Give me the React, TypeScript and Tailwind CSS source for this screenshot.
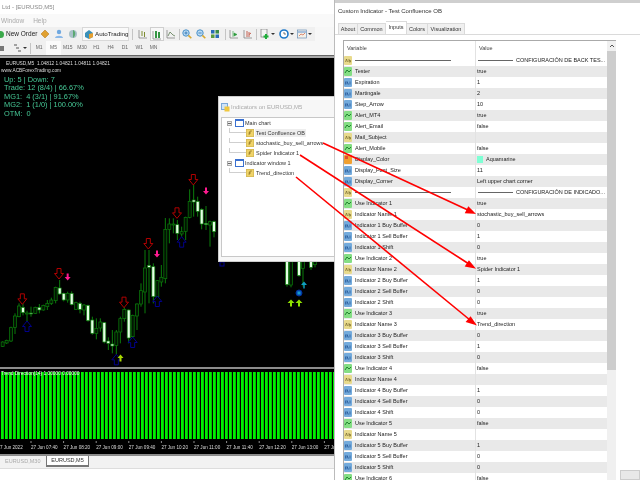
import type { ReactNode } from "react"

// [x, wickTop, wickBottom, bodyTop, bodyBottom, white] in 3x crop units
const candles: number[][] = [
  [8, 634, 651, 636, 649, 0], [20, 629, 642, 631, 639, 0], [33, 590, 636, 593, 633, 0],
  [45, 550, 612, 558, 592, 0], [57, 520, 562, 528, 560, 0], [69, 520, 556, 532, 548, 1],
  [81, 542, 600, 549, 552, 0], [93, 530, 560, 549, 552, 1], [106, 530, 552, 532, 550, 0],
  [118, 522, 550, 532, 540, 1], [130, 524, 542, 526, 540, 0], [142, 510, 540, 520, 530, 0],
  [154, 503, 525, 510, 520, 0], [167, 470, 520, 472, 512, 0], [179, 450, 495, 474, 492, 1],
  [191, 488, 514, 490, 510, 1], [203, 485, 518, 490, 510, 0], [215, 484, 526, 490, 524, 1],
  [228, 515, 540, 518, 538, 0], [240, 515, 550, 520, 538, 1], [252, 522, 556, 525, 540, 0],
  [264, 524, 575, 526, 572, 1], [277, 560, 614, 570, 610, 1], [289, 565, 628, 595, 610, 0],
  [301, 565, 605, 576, 594, 0], [313, 576, 640, 578, 636, 1], [325, 622, 660, 633, 640, 1],
  [337, 600, 670, 642, 648, 1], [349, 600, 675, 606, 646, 0], [361, 560, 640, 566, 606, 0],
  [373, 525, 575, 538, 566, 0], [386, 538, 640, 540, 624, 1], [398, 554, 624, 556, 620, 0],
  [411, 520, 600, 522, 558, 0], [423, 460, 530, 482, 522, 0], [435, 360, 550, 414, 486, 0],
  [447, 360, 520, 406, 412, 1], [460, 400, 520, 410, 500, 1], [472, 450, 520, 452, 500, 0],
  [484, 405, 470, 442, 456, 0], [496, 264, 460, 298, 446, 0], [508, 265, 340, 282, 298, 0],
  [520, 265, 310, 282, 285, 0], [532, 270, 330, 284, 310, 1], [545, 290, 320, 305, 312, 0],
  [557, 260, 330, 262, 304, 0], [569, 178, 265, 214, 262, 0], [581, 165, 260, 210, 216, 1],
  [593, 200, 260, 214, 244, 1], [605, 235, 298, 238, 282, 1], [618, 228, 300, 280, 284, 1],
  [630, 272, 350, 275, 285, 0], [642, 272, 322, 275, 305, 1],
  // right of the floating window
  [861, 390, 470, 390, 464, 1], [873, 390, 472, 390, 465, 0], [897, 390, 440, 390, 437, 1],
  [909, 390, 470, 390, 415, 0], [933, 390, 420, 390, 412, 1], [945, 390, 412, 390, 404, 0],
]

const redArrows = [[67, 508], [177, 432], [372, 518], [445, 342], [531, 250], [580, 150]]
const pinkArrows = [[203, 441], [471, 372], [618, 183]]
const blueArrows = [[81, 588], [349, 688], [398, 636], [472, 513], [545, 335]]

const timeLabels = ["07:40", "08:20", "09:00", "09:40", "10:20", "11:00", "11:40", "12:20", "13:00"]
const periods = ["M1", "M5", "M15", "M30", "H1", "H4", "D1", "W1", "MN"]

type RowType = "s" | "b" | "n" | "c"
const rows: [RowType, string, string][] = [
  ["s", "—", "CONFIGURACIÓN DE BACK TES..."],
  ["b", "Tester", "true"],
  ["n", "Expiration", "1"],
  ["n", "Martingale", "2"],
  ["n", "Step_Arrow", "10"],
  ["b", "Alert_MT4", "true"],
  ["b", "Alert_Email", "false"],
  ["s", "Mail_Subject", ""],
  ["b", "Alert_Mobile", "false"],
  ["c", "Display_Color", "Aquamarine"],
  ["n", "Display_Font_Size", "11"],
  ["n", "Display_Corner", "Left upper chart corner"],
  ["s", "—", "CONFIGURACIÓN DE INDICADO..."],
  ["b", "Use Indicator 1", "true"],
  ["s", "Indicator Name 1", "stochastic_buy_sell_arrows"],
  ["n", "Indicator 1 Buy Buffer", "0"],
  ["n", "Indicator 1 Sell Buffer", "1"],
  ["n", "Indicator 1 Shift", "0"],
  ["b", "Use Indicator 2", "true"],
  ["s", "Indicator Name 2", "Spider Indicator 1"],
  ["n", "Indicator 2 Buy Buffer", "1"],
  ["n", "Indicator 2 Sell Buffer", "0"],
  ["n", "Indicator 2 Shift", "0"],
  ["b", "Use Indicator 3", "true"],
  ["s", "Indicator Name 3", "Trend_direction"],
  ["n", "Indicator 3 Buy Buffer", "0"],
  ["n", "Indicator 3 Sell Buffer", "1"],
  ["n", "Indicator 3 Shift", "0"],
  ["b", "Use Indicator 4", "false"],
  ["s", "Indicator Name 4", ""],
  ["n", "Indicator 4 Buy Buffer", "1"],
  ["n", "Indicator 4 Sell Buffer", "0"],
  ["n", "Indicator 4 Shift", "0"],
  ["b", "Use Indicator 5", "false"],
  ["s", "Indicator Name 5", ""],
  ["n", "Indicator 5 Buy Buffer", "1"],
  ["n", "Indicator 5 Sell Buffer", "0"],
  ["n", "Indicator 5 Shift", "0"],
  ["b", "Use Indicator 6", "false"],
]

const Ico = ({ children, w = 10 }: { children: ReactNode; w?: number }) => (
  <svg width={w} height={10} viewBox="0 0 10 10" className="shrink-0">
    {children}
  </svg>
)

const Tool = ({ children, w = "w-[14px]" }: { children: ReactNode; w?: string }) => (
  <div className={`flex ${w} h-[14px] shrink-0 items-center justify-center`}>{children}</div>
)

const Sep = ({ m = "mx-[3px]" }: { m?: string }) => <div className={`${m} h-[11px] w-px shrink-0 bg-[#c4c4c4]`} />

const Caret = () => <div className="ml-px h-0 w-0 border-x-[2px] border-t-[2px] border-x-transparent border-t-[#333]" />

const ChartIcon = ({ kind }: { kind: string }) => (
  <Ico>
    <path d="M1 1v8h8" stroke="#777" strokeWidth="0.7" fill="none" />
    {kind === "bar" && <path d="M4 2v5M6.5 3v5" stroke="#7c8c30" strokeWidth="1" />}
    {kind === "candle" && <path d="M4 1v7M7 2v6" stroke="#1f8a30" strokeWidth="1.8" />}
    {kind === "line" && <path d="M2 7l2-4 3 3 2 1" stroke="#5a7a50" strokeWidth="0.8" fill="none" />}
    {kind === "shift" && <path d="M4 2v6M5 4l3 1.5L5 7z" fill="#2a9a3a" stroke="#2a9a3a" strokeWidth="0.6" />}
    {kind === "auto" && <path d="M4 2v6M6 3v5M8 4l-2 1.5" stroke="#c05040" strokeWidth="0.9" fill="none" />}
  </Ico>
)

const ZoomIcon = ({ plus }: { plus?: boolean }) => (
  <Ico>
    <circle cx="4" cy="4" r="3.2" fill="#bcdcf4" stroke="#4a90c8" strokeWidth="1" />
    <path d="M6.4 6.4L9.3 9.3" stroke="#d8a830" strokeWidth="1.6" />
    <path d={plus ? "M2.4 4h3.2M4 2.4v3.2" : "M2.4 4h3.2"} stroke="#2a70b0" strokeWidth="0.8" />
  </Ico>
)

const RowIcon = ({ type }: { type: RowType }) => {
  if (type === "c")
    return (
      <svg width="8" height="9" viewBox="0 0 8 9" className="shrink-0">
        <rect width="8" height="9" rx="1" fill="#f0a030" />
        <rect x="1" y="1" width="3" height="3" fill="#e05030" />
      </svg>
    )
  const fill = type === "s" ? "#e8da8c" : type === "b" ? "#84de84" : "#74abdc"
  return (
    <svg width="8" height="9" viewBox="0 0 8 9" className="shrink-0">
      <rect width="8" height="9" rx="1" fill={fill} />
      {type === "s" && <path d="M1.5 6l1-3 1 3M5 3v3h1.5V4.5H5" stroke="#6a5a20" strokeWidth="0.6" fill="none" />}
      {type === "b" && <path d="M1 6l2-3 2 2 2-2" stroke="#167a26" strokeWidth="0.9" fill="none" />}
      {type === "n" && <path d="M1.5 3.5v3M3 6.5v-3l1.5 3M6 3.5v3" stroke="#1d4f90" strokeWidth="0.7" fill="none" />}
    </svg>
  )
}

const Row = ({ row, i }: { row: [RowType, string, string]; i: number }) => {
  const [type, name, value] = row
  const divider = name === "—"
  return (
    <div className={`flex h-[11px] items-center text-[#222] ${i % 2 ? "bg-[#e9e9e9]" : "bg-white"}`}>
      <div className="flex w-[131px] shrink-0 items-center gap-[3px]">
        <RowIcon type={type} />
        {divider ? <span className="h-px w-[96px] bg-[#666]" /> : <span className="whitespace-nowrap">{name}</span>}
      </div>
      <div className="flex h-[11px] flex-1 items-center gap-[3px] border-l border-[#e2e2e2] pl-px whitespace-nowrap">
        {divider && <span className="ml-[1px] h-px w-[35px] bg-[#666]" />}
        {type === "c" && <span className="h-[7px] w-[6px] bg-[#7fffd4]" />}
        <span>{value}</span>
      </div>
    </div>
  )
}

const Chart = () => {
  const px = (x: number) => x / 3
  const py = (y: number) => 130 + y / 3
  return (
    <svg width="335" height="309" viewBox="0 58 335 309" className="absolute inset-0">
      {candles.map(([x, wt, wb, bt, bb, white], i) => (
        <g key={i}>
          <line x1={px(x)} x2={px(x)} y1={py(wt)} y2={py(wb)} stroke="#0b7d0b" strokeWidth="1" />
          <rect
            x={px(x) - 1.5}
            y={py(bt)}
            width="3"
            height={(bb - bt) / 3}
            fill={white ? "#e4ffe4" : "#021402"}
            stroke="#0b7d0b"
            strokeWidth="0.7"
          />
        </g>
      ))}
      {redArrows.map(([x, y], i) => (
        <path
          key={i}
          transform={`translate(${px(x)} ${py(y)})`}
          d="M-2-5.5h4v5h2.5L0 5-4.500-.5H-2z"
          fill="#000"
          stroke="#b00000"
          strokeWidth="1"
        />
      ))}
      {blueArrows.map(([x, y], i) => (
        <path
          key={i}
          transform={`translate(${px(x)} ${py(y)})`}
          d="M-2 5.500h4v-5h2.500L0-5-4.500.5H-2z"
          fill="#000"
          stroke="#00008b"
          strokeWidth="1"
        />
      ))}
      <rect x="220" y="262" width="4" height="4" fill="none" stroke="#00008b" strokeWidth="1" />
      {pinkArrows.map(([x, y], i) => (
        <path
          key={i}
          transform={`translate(${px(x)} ${py(y)})`}
          d="M-1-3.500h2V0h2L0 3.500-3 0h2z"
          fill="#ff1a90"
        />
      ))}
      <path transform="translate(120.500 358)" d="M-1 3.500h2V0h2L0-3.500-3 0h2z" fill="#a8d800" />
      <path transform="translate(291 303)" d="M-1 3.500h2V0h2.500L0-3.500-3.500 0h2.500z" fill="#8ee000" />
      <path transform="translate(299 303)" d="M-1 3.500h2V0h2.500L0-3.500-3.500 0h2.500z" fill="#8ee000" />
      <path transform="translate(304 285)" d="M-.7 3.500h1.400V0h2.300L0-3.500-3 0h2.300z" fill="#10a0c0" />
      <circle cx="299" cy="293" r="3" fill="#0a5ab0" stroke="#0030a0" />
      <path d="M297.500 293h3M299 291.500v3" stroke="#20d0e0" strokeWidth="0.7" />
    </svg>
  )
}

export default function App() {
  return (
    <div className="relative flex h-[480px] w-[640px] overflow-hidden bg-white font-['Liberation_Sans',sans-serif] blur-[0.35px]">
      {/* terminal */}
      <div className="flex w-[335px] shrink-0 flex-col border-r border-[#bbb]">
        <div className="flex h-[14px] items-center bg-white pl-[2px] text-[6px] text-[#8a8a8a]">Ltd - [EURUSD,M5]</div>
        <div className="flex h-[13px] items-center gap-[9px] bg-[#f9f9f9] pl-px text-[6.500px] text-[#aaa]">
          <span>Window</span>
          <span>Help</span>
        </div>
        <div className="h-[14px] bg-[#f7f7f7]">
          <div className="flex h-[14px] w-[315px] items-center bg-[#f0f0f0] text-[6.500px] text-[#222]">
            <div className="flex w-[38px] shrink-0 items-center gap-[2px]">
              <div className="h-[7px] w-[4px] rounded-r-sm bg-[#3aa84a]" />
              <span className="whitespace-nowrap">New Order</span>
            </div>
            <Tool>
              <Ico><path d="M5 1l4 4-4 4-4-4z" fill="#e0a030" stroke="#b07010" strokeWidth="0.5" /></Ico>
            </Tool>
            <Tool>
              <Ico><circle cx="5" cy="3" r="2.200" fill="#6fa8e0" /><path d="M1 9c0-3 8-3 8 0z" fill="#8ab8e8" /></Ico>
            </Tool>
            <Tool>
              <Ico><circle cx="5" cy="5" r="4" fill="#a8c0c8" /><path d="M5 1c3 1 3 6 0 8z" fill="#5aa870" /></Ico>
            </Tool>
            <div className="ml-[2px] flex h-[14px] w-[47px] shrink-0 items-center gap-[1px] border border-[#d8d8d8] bg-[#fafafa] pl-[1px]">
              <Ico><path d="M1 4l4-3 4 3v4l-4 2-4-2z" fill="#3a90b8" /><path d="M5 5l4-1v4l-4 2z" fill="#e8a030" /></Ico>
              <span className="whitespace-nowrap text-[6.200px]">AutoTrading</span>
            </div>
            <Sep />
            <Tool><ChartIcon kind="bar" /></Tool>
            <div className="h-[14px] border border-[#cfcfcf] bg-[#f8f8f8]">
              <Tool w="w-[12px]"><ChartIcon kind="candle" /></Tool>
            </div>
            <Tool><ChartIcon kind="line" /></Tool>
            <Sep m="mx-[0.5px]" />
            <Tool><ZoomIcon plus /></Tool>
            <Tool><ZoomIcon /></Tool>
            <Tool>
              <Ico>
                <rect x="1" y="1" width="8" height="8" fill="#e8f0e0" />
                <rect x="1" y="1" width="3.500" height="3.500" fill="#2a6ab8" />
                <rect x="5.500" y="1" width="3.500" height="3.500" fill="#3a8a48" />
                <rect x="1" y="5.500" width="3.500" height="3.500" fill="#5a9a40" />
                <rect x="5.500" y="5.500" width="3.500" height="3.500" fill="#2a6ab8" />
              </Ico>
            </Tool>
            <Sep m="ml-[3px] mr-[1px]" />
            <Tool><ChartIcon kind="shift" /></Tool>
            <Tool><ChartIcon kind="auto" /></Tool>
            <Sep m="ml-[1px]" />
            <div className="flex w-[18px] shrink-0 items-center justify-end">
              <Ico>
                <rect x="1" y="0" width="6" height="8" fill="#f4f4f4" stroke="#777" strokeWidth="0.7" />
                <path d="M6 5v5M3.500 7.500h5" stroke="#1fae3a" strokeWidth="2" />
              </Ico>
              <Caret />
            </div>
            <div className="ml-[4px] flex items-center">
              <Ico><circle cx="5" cy="5" r="4" fill="#fff" stroke="#1f78c8" strokeWidth="1.600" /><path d="M5 3v2h2" stroke="#444" strokeWidth="0.7" fill="none" /></Ico>
              <Caret />
            </div>
            <div className="ml-[3px] flex items-center">
              <Ico>
                <rect x="0.500" y="1" width="9" height="8" fill="#f4f0e8" stroke="#6a90b8" strokeWidth="0.700" />
                <path d="M1 3h8" stroke="#5a90d0" />
                <path d="M2 7l2-2 2 1 2-2" stroke="#d06040" strokeWidth="0.700" fill="none" />
              </Ico>
              <Caret />
            </div>
          </div>
        </div>
        <div className="h-[14px] bg-[#f7f7f7]">
          <div className="flex h-[14px] w-[160px] items-center bg-[#f0f0f0] text-[5px] text-[#666]">
            <div className="h-[5px] w-[4px] shrink-0 bg-[#777]" />
            <div className="ml-[8px] flex w-[17px] shrink-0 items-center">
              <Ico><path d="M2 2h3M4 5h3M6 8h3" stroke="#555" strokeWidth="1.200" /></Ico>
              <Caret />
            </div>
            <Sep m="mx-[1px]" />
            {periods.map((p) => (
              <div
                key={p}
                className={`flex h-[14px] w-[14.300px] shrink-0 items-center justify-center ${p === "M5" ? "bg-[#fbfbfb]" : ""}`}
              >
                {p}
              </div>
            ))}
          </div>
        </div>
        <div className="h-[3px] border-t border-[#666] bg-[#a8a8a8]" />

        {/* main chart */}
        <div className="relative h-[309px] overflow-hidden bg-black">
          <Chart />
          <div className="relative pt-[2px] text-[4.800px] leading-[7px] text-[#ddd]">
            <div className="pl-[6px] whitespace-nowrap">EURUSD,M5 &nbsp;1.04812 1.04821 1.04811 1.04821</div>
            <div className="pl-px">www.ACBForexTrading.com</div>
            <div className="mt-[2px] pl-[4px] text-[7.400px] leading-[8.400px] whitespace-pre text-[#46c896]">
              <div>Up: 5 | Down: 7</div>
              <div>Trade: 12 (8/4) | 66.67%</div>
              <div>MG1:  4 (3/1) | 91.67%</div>
              <div>MG2:  1 (1/0) | 100.00%</div>
              <div>OTM:  0</div>
            </div>
          </div>
        </div>
        <div className="h-[2px] bg-[#8c8c8c]" />

        {/* indicator window */}
        <div className="h-[85px] overflow-hidden bg-black">
          <div className="relative h-[74px]">
            <svg width="335" height="74" viewBox="0 369 335 74" className="absolute inset-0">
              {Array.from({ length: 84 }, (_, i) => (
                <rect key={i} x={1 + i * 4} y="372" width="2.800" height="67" fill="#00f000" />
              ))}
              {Array.from({ length: 10 }, (_, i) => (
                <line key={i} x1={31 + i * 32.600} x2={31 + i * 32.600} y1="441" y2="443" stroke="#ccc" strokeWidth="0.700" />
              ))}
            </svg>
            <div className="relative pt-[1px] pl-px text-[4.800px] whitespace-nowrap text-[#eee]">Trend Direction(14) 1.00000 0.00000</div>
          </div>
          <div className="flex items-center pt-[1px] text-[4.600px] leading-[7px] whitespace-nowrap text-[#ddd]">
            <div className="w-[31px] shrink-0">7 Jun 2022</div>
            {timeLabels.map((t) => (
              <div key={t} className="w-[32.600px] shrink-0">27 Jun {t}</div>
            ))}
            <div className="shrink-0">27 Ju</div>
          </div>
        </div>
        <div className="h-[2px] bg-[#8c8c8c]" />

        {/* chart tabs */}
        <div className="flex h-[12px] items-start bg-[#f2f2f2] text-[5.500px]">
          <div className="flex h-[11px] w-[46px] items-center pl-[5px] text-[#aaa]">EURUSD,M30</div>
          <div className="flex h-[11px] w-[43px] items-center justify-center border border-b-2 border-t-0 border-[#777] bg-white text-[#333]">EURUSD,M5</div>
        </div>
        <div className="flex-1 border-t border-[#ddd] bg-white" />
      </div>

      {/* properties dialog */}
      <div className="flex h-[480px] w-[305px] shrink-0 flex-col overflow-hidden bg-white text-[5.500px]">
        <div className="h-[3px] bg-[#cfcfcf]" />
        <div className="flex h-[17px] items-center pl-[3px] text-[6px] text-[#333]">Custom Indicator - Test Confluence OB</div>
        <div className="flex h-[15px] items-end border-b border-[#dadada] pl-[3px] text-[#333]">
          <div className="flex h-[11px] w-[20px] items-center justify-center border border-b-0 border-[#dadada] bg-[#f0f0f0]">About</div>
          <div className="flex h-[11px] w-[28px] items-center justify-center border border-b-0 border-l-0 border-[#dadada] bg-[#f0f0f0]">Common</div>
          <div className="flex h-[13px] w-[21px] items-center justify-center border border-b-0 border-l-0 border-[#dadada] bg-white pb-[2px]">Inputs</div>
          <div className="flex h-[11px] w-[21px] items-center justify-center border border-b-0 border-l-0 border-[#dadada] bg-[#f0f0f0]">Colors</div>
          <div className="flex h-[11px] w-[37px] items-center justify-center border border-b-0 border-l-0 border-[#dadada] bg-[#f0f0f0]">Visualization</div>
        </div>
        <div className="flex flex-1 overflow-hidden pt-[5px] pl-[8px]">
          <div className="flex w-[273px] shrink-0 border-t border-l border-[#aaa]">
            <div className="w-[263px] shrink-0">
              <div className="flex h-[14px] items-center text-[#444]">
                <div className="w-[131px] pl-[3px]">Variable</div>
                <div className="flex h-[14px] items-center border-l border-[#e2e2e2] pl-[3px]">Value</div>
              </div>
              {rows.map((r, i) => (
                <Row key={i} row={r} i={i} />
              ))}
            </div>
            <div className="w-[9px] shrink-0 bg-[#f0f0f0]">
              <div className="flex h-[10px] items-center justify-center">
                <svg width="6" height="4" viewBox="0 0 6 4"><path d="M1 3l2-2 2 2" stroke="#555" fill="none" /></svg>
              </div>
              <div className="h-[319px] bg-[#cdcdcd]" />
            </div>
          </div>
          <div className="flex flex-1 flex-col justify-end pl-[4px]">
            <div className="h-[10px] border border-[#ccc] bg-[#e8e8e8]" />
          </div>
        </div>
      </div>

      {/* floating Indicators window */}
      <div className="absolute top-[96px] left-[218px] flex h-[166px] w-[117px] flex-col border border-[#ccc] bg-[#f7f7f7] text-[5.500px]">
        <div className="flex h-[20px] items-center gap-[1px] pl-[2px] text-[#aaa]">
          <svg width="9" height="9" viewBox="0 0 9 9" className="shrink-0">
            <rect x="0.500" y="0.500" width="6" height="6" fill="#cfe4f8" stroke="#7aa8d8" />
            <rect x="3.500" y="3.500" width="5" height="5" fill="#f0c840" />
          </svg>
          <span className="whitespace-nowrap text-[6px]">Indicators on EURUSD,M5</span>
        </div>
        <div className="mr-[-1px] ml-[2px] h-[140px] border border-[#c8c8c8] bg-white text-[#333]">
          <TreeHead label="Main chart" />
          <TreeItem label="Test Confluence OB" selected />
          <TreeItem label="stochastic_buy_sell_arrows" />
          <TreeItem label="Spider Indicator 1" />
          <TreeHead label="Indicator window 1" />
          <TreeItem label="Trend_direction" />
        </div>
      </div>

      {/* red annotation arrows */}
      <svg width="640" height="480" viewBox="0 0 640 480" className="pointer-events-none absolute inset-0">
        <g stroke="#ff0000" strokeWidth="1.600" fill="#ff0000">
          <line x1="323" y1="143" x2="470" y2="211" />
          <path d="M474 213l-8-.5 2.500-5z" />
          <line x1="300" y1="155" x2="469" y2="264" />
          <path d="M474 267.500l-8-1.500 3-4.500z" />
          <line x1="296" y1="177" x2="470" y2="320" />
          <path d="M475 324l-8-2.500 3.500-4z" />
        </g>
      </svg>
    </div>
  )
}

function TreeHead({ label }: { label: string }) {
  return (
    <div className="flex h-[10px] items-center pl-[5px]">
      <div className="flex h-[5px] w-[5px] shrink-0 items-center justify-center border border-[#aaa] bg-[#eee]">
        <div className="h-px w-[3px] bg-[#666]" />
      </div>
      <svg width="9" height="8" viewBox="0 0 9 8" className="ml-[3px] shrink-0">
        <rect x="0.500" y="0.500" width="8" height="7" fill="#fff" stroke="#3a70d0" />
        <rect x="0" y="0" width="9" height="2" fill="#3a70d0" />
      </svg>
      <span className="ml-[1px] whitespace-nowrap">{label}</span>
    </div>
  )
}

function TreeItem({ label, selected }: { label: string; selected?: boolean }) {
  return (
    <div className="flex h-[10px] items-center pl-[7px]">
      <div className="h-[5px] w-[17px] -translate-y-[3px] shrink-0 border-b border-l border-[#cfcfcf]" />
      <svg width="8" height="8" viewBox="0 0 8 8" className="shrink-0">
        <rect width="8" height="8" rx="1" fill="#efd36a" stroke="#b09030" strokeWidth="0.600" />
        <path d="M3 6l1-4h2M2.500 4h2.500" stroke="#7a6010" strokeWidth="0.600" fill="none" />
      </svg>
      <span className={`ml-[1px] px-[1px] whitespace-nowrap ${selected ? "bg-[#eee]" : ""}`}>{label}</span>
    </div>
  )
}
